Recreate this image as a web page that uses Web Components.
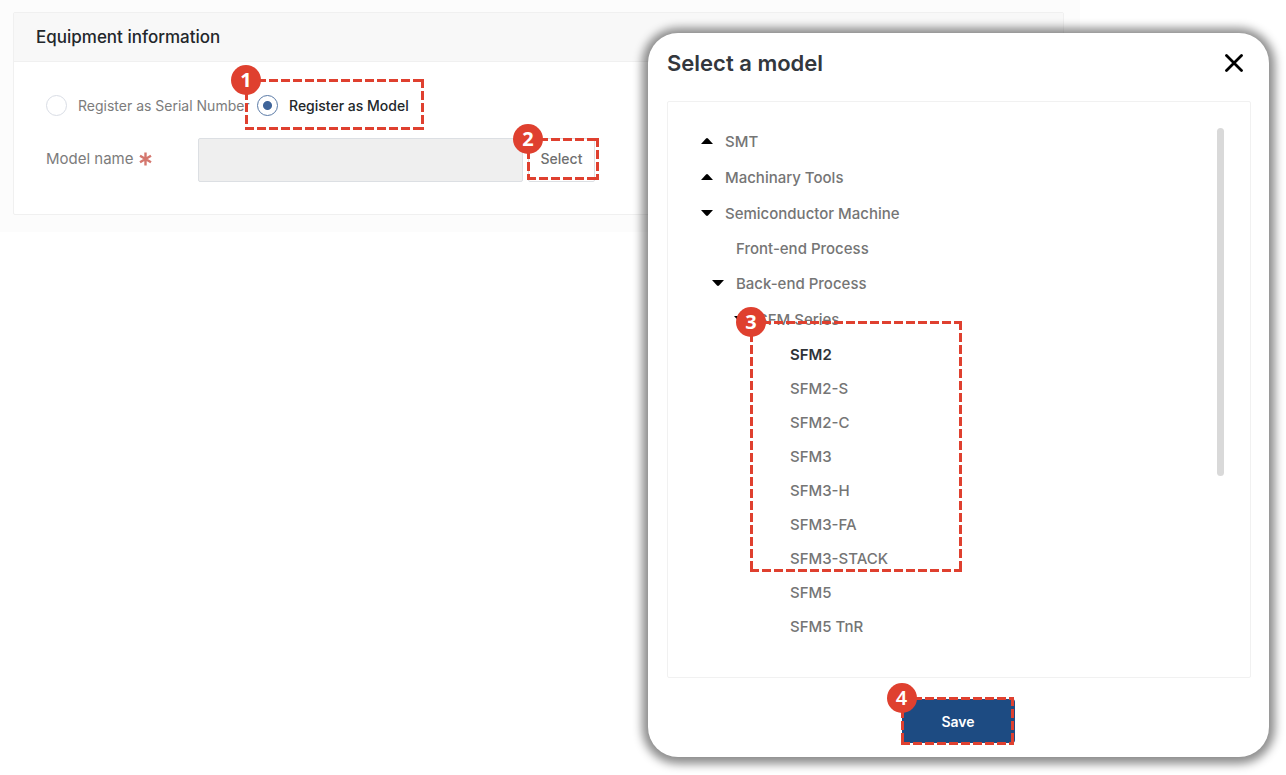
<!DOCTYPE html>
<html lang="en">
<head>
<meta charset="utf-8">
<meta name="viewport" content="width=device-width, initial-scale=1">
<title>Equipment information</title>
<style>
  body { margin: 0; background: #fff; font-family: Inter, "Noto Sans", sans-serif; font-size: 14px; }
</style>
</head>
<body>
<equipment-panel heading="Equipment information"></equipment-panel>

<model-dialog heading="Select a model">
  <tree-node label="SMT" state="closed"></tree-node>
  <tree-node label="Machinary Tools" state="closed"></tree-node>
  <tree-node label="Semiconductor Machine" state="open">
    <tree-node label="Front-end Process" depth="1"></tree-node>
    <tree-node label="Back-end Process" depth="1" state="open">
      <tree-node label="SFM Series" depth="2" state="open">
        <step-callout number="3" style="--inset: -16px 255px 3px 82px">
          <tree-node label="SFM2" depth="3" selected></tree-node>
          <tree-node label="SFM2-S" depth="3"></tree-node>
          <tree-node label="SFM2-C" depth="3"></tree-node>
          <tree-node label="SFM3" depth="3"></tree-node>
          <tree-node label="SFM3-H" depth="3"></tree-node>
          <tree-node label="SFM3-FA" depth="3"></tree-node>
          <tree-node label="SFM3-STACK" depth="3"></tree-node>
        </step-callout>
        <tree-node label="SFM5" depth="3"></tree-node>
        <tree-node label="SFM5 TnR" depth="3"></tree-node>
      </tree-node>
    </tree-node>
  </tree-node>
</model-dialog>

<script>
class BaseElement extends HTMLElement {
  render(html) {
    this.attachShadow({ mode: 'open' }).innerHTML =
      '<style>*{box-sizing:border-box}button,input{font:inherit;margin:0}</style>' + html;
  }
}

/* Numbered dashed frame laid over whatever is slotted in; --inset sets its reach. */
class StepCallout extends BaseElement {
  connectedCallback() {
    this.render(`
      <style>
        :host { display: block; position: relative; --red: #df402f; }
        .frame {
          position: absolute; inset: var(--inset, 0); pointer-events: none; z-index: 1;
          --h: repeating-linear-gradient(90deg, var(--red) 0 9px, transparent 9px 12px);
          --v: repeating-linear-gradient(180deg, var(--red) 0 9px, transparent 9px 12px);
          background:
            var(--h) top / 100% 3px no-repeat, var(--h) bottom / 100% 3px no-repeat,
            var(--v) left / 3px 100% no-repeat, var(--v) right / 3px 100% no-repeat;
        }
        .badge {
          position: absolute; left: -14px; top: -14px; width: 30px; height: 30px;
          border-radius: 50%; background: var(--red); color: #fff; text-align: center;
          font: 700 20px/30px "Noto Sans", sans-serif;
        }
        :host([number="4"]) .badge { font-weight: 600; }
      </style>
      <slot></slot>
      <div class="frame"><span class="badge">${this.getAttribute('number')}</span></div>`);
  }
}
customElements.define('step-callout', StepCallout);

class EquipmentPanel extends BaseElement {
  connectedCallback() {
    this.render(`
      <style>
        :host { display: block; width: 84%; padding: 12px 16px 17px 13px; background: #fcfcfc; box-sizing: border-box; }
        .card { border: 1px solid #f0f0f0; border-radius: 2px; background: #fff; }
        h2 {
          margin: 0; padding: 0 22px; border-bottom: 1px solid #f0f0f0; background: #f8f8f8;
          font-size: 17px; line-height: 48px; font-weight: 500; color: #23272b;
        }
        form { display: flex; flex-direction: column; gap: 22px; padding: 33px 32px 32px; white-space: nowrap; color: #7c7c7c; }
        .choices { display: grid; grid-template-columns: 211px max-content; }
        .choice { display: flex; align-items: center; gap: 11px; min-width: 155px; line-height: 20px; height: 21px; }
        .choice.on { color: #23272b; font-weight: 500; }
        input[type=radio] {
          appearance: none; width: 21px; height: 21px; border: 1px solid #d9dde5;
          border-radius: 50%; background: #fff; flex: none;
        }
        input[type=radio]:checked { border-color: #5a7aa6; background: radial-gradient(circle, #40659a 0 4px, #fff 5px); }
        .field { display: grid; grid-template-columns: 152px 325px max-content; align-items: center; }
        .name { display: flex; align-items: center; gap: 5px; padding-bottom: 2px; font-size: 15px; line-height: 20px; }
        input[type=text] { width: 100%; height: 44px; padding: 0 12px; border: 1px solid #dcdfe3; border-radius: 2px; background: #efefef; }
        step-callout { margin-left: 5px; }
        .choices step-callout { margin-left: 0; }
        button {
          display: block; width: 67px; height: 44px; padding: 0 0 3px; border: 1px solid #dcdfe3;
          border-radius: 2px; background: #fff; color: #6f6f6f; font-weight: 500;
        }
      </style>
      <section class="card">
        <h2>${this.getAttribute('heading')}</h2>
        <form>
          <div class="choices">
            <label class="choice"><input type="radio" name="kind">Register as Serial Number</label>
            <step-callout number="1" style="--inset: -16px -12px -14px -12px">
              <label class="choice on"><input type="radio" name="kind" checked>Register as Model</label>
            </step-callout>
          </div>
          <div class="field">
            <label class="name" for="model">Model name
              <svg width="13" height="14" viewBox="0 0 13 14" fill="none" stroke="#d4776e" stroke-width="2.4" aria-hidden="true"><path d="M6.5 .5v13M1 3.7l11 6.6M12 3.7L1 10.3"/></svg>
            </label>
            <input type="text" id="model" readonly>
            <step-callout number="2" style="--inset: 0 -4px 2px -1px"><button type="button">Select</button></step-callout>
          </div>
        </form>
      </section>`);
  }
}
customElements.define('equipment-panel', EquipmentPanel);

class TreeNode extends BaseElement {
  connectedCallback() {
    const state = this.getAttribute('state');
    const depth = this.getAttribute('depth') || '0';
    const icon = state
      ? `<svg width="12" height="6" viewBox="0 0 12 6" aria-hidden="true"><path d="${state === 'open' ? 'M0 0h12L7 5.5Q6 6.3 5 5.5z' : 'M0 6h12L7 .5Q6-.3 5 .5z'}"/></svg>`
      : '<i></i>';
    this.render(`
      <style>
        :host { display: block; }
        button {
          display: flex; align-items: center; gap: 12px; width: 100%; height: ${state ? 36 : 34}px;
          padding: 0 0 0 ${[33, 44, 66, 98][depth]}px; border: 0; background: none;
          color: #757575; font-weight: 500; text-align: left; white-space: nowrap;
        }
        :host([selected]) button { color: #2f3338; font-weight: 600; }
        svg, i { width: 12px; flex: none; }
      </style>
      <button type="button">${icon}<span>${this.getAttribute('label')}</span></button>
      <slot></slot>`);
  }
}
customElements.define('tree-node', TreeNode);

class ModelDialog extends BaseElement {
  connectedCallback() {
    this.render(`
      <style>
        :host {
          display: block; position: absolute; top: 33px; right: 17px; width: 621px; max-width: 94%;
          box-sizing: border-box; padding: 0 18px 14px 19px; border-radius: 30px; background: #fff;
          box-shadow: 0 1px 10px 6px rgba(0, 0, 0, .45);
        }
        header { display: flex; align-items: center; justify-content: space-between; height: 60px; margin-bottom: 8px; }
        h2 { margin: 0; font-size: 22px; line-height: 30px; font-weight: 600; color: #33373d; }
        .close { display: flex; padding: 8px; border: 0; background: none; }
        .box { display: flex; padding: 21px 26px 34px 0; border: 1px solid #f1f1f1; border-radius: 2px; font-size: 15px; }
        .tree { flex: 1; }
        .thumb { width: 7px; height: 348px; margin-top: 5px; border-radius: 4px; background: #d9d9d9; }
        footer { display: flex; justify-content: center; padding: 21px 2px 0 0; }
        .save {
          display: block; width: 113px; height: 44px; border: 0; border-radius: 3px;
          background: #1d4b82; color: #fff; font-weight: 600;
        }
      </style>
      <header>
        <h2>${this.getAttribute('heading')}</h2>
        <button class="close" type="button" aria-label="Close">
          <svg width="18" height="18" viewBox="0 0 18 18" fill="none" stroke="#000" stroke-width="2.8" stroke-linecap="round"><path d="M1.5 1.5l15 15M16.5 1.5l-15 15"/></svg>
        </button>
      </header>
      <div class="box">
        <div class="tree"><slot></slot></div>
        <div class="thumb"></div>
      </div>
      <footer>
        <step-callout number="4" style="--inset: -2px 1px -2px -1px"><button class="save" type="button">Save</button></step-callout>
      </footer>`);
  }
}
customElements.define('model-dialog', ModelDialog);
</script>
</body>
</html>
